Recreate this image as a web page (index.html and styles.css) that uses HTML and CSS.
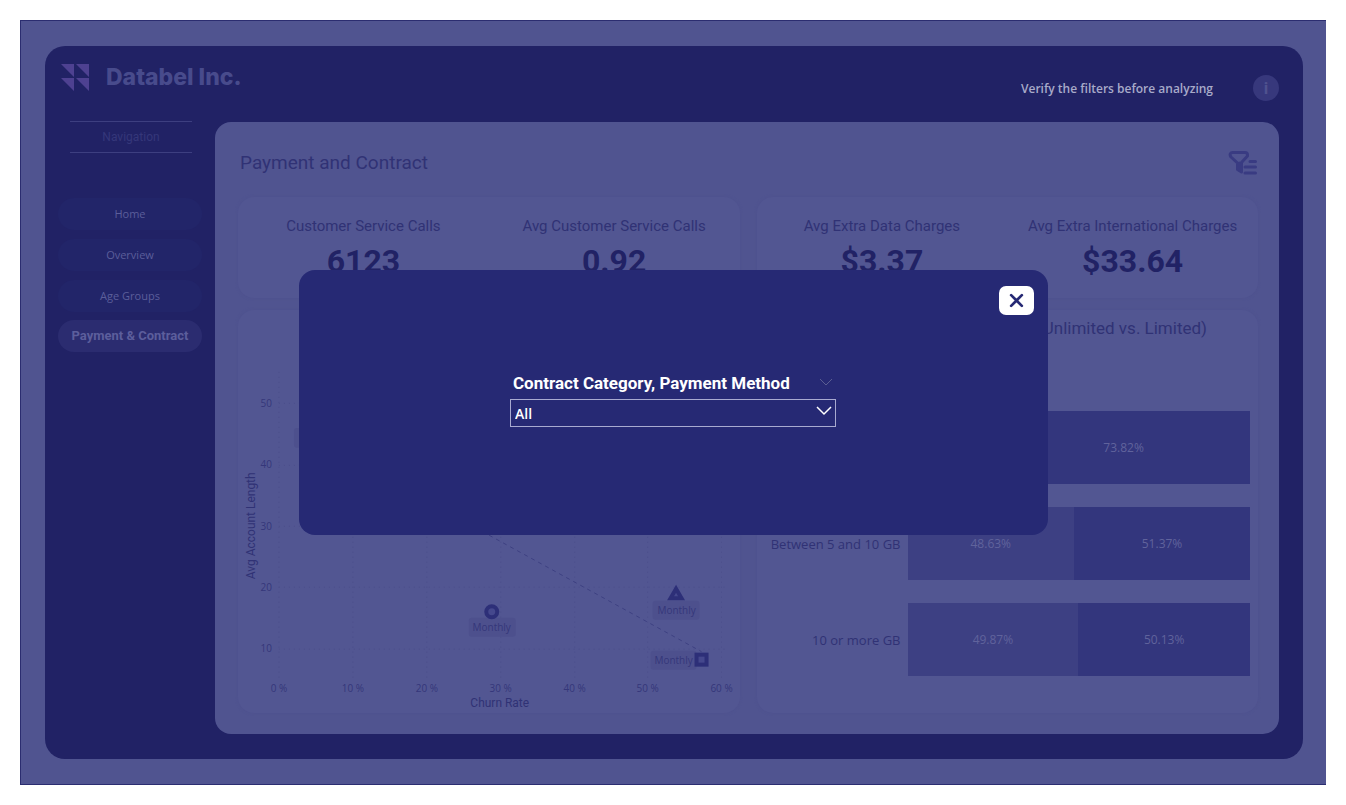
FILE: index.html
```html
<!DOCTYPE html>
<html lang="en">
<head>
<meta charset="utf-8">
<meta name="viewport" content="width=device-width, initial-scale=1">
<title>Databel Inc. - Payment and Contract</title>
<link rel="stylesheet" href="styles.css">
</head>
<body>
<div class="report">
  <div class="frame">
    <header class="topbar">
      <svg class="logo" viewBox="0 0 28 28" aria-hidden="true">
        <path d="M0 0h13v13zM15 0h13v13zM0 14h13v13zM15 14h13v13z"/>
      </svg>
      <span class="brand">Databel Inc.</span>
      <span class="notice">Verify the filters before analyzing</span>
      <button class="info" type="button" aria-label="Information">i</button>
    </header>

    <nav class="sidebar" aria-label="Pages">
      <div class="nav-title">Navigation</div>
      <a class="nav-link" href="#home">Home</a>
      <a class="nav-link" href="#overview">Overview</a>
      <a class="nav-link" href="#age">Age Groups</a>
      <a class="nav-link active" href="#payment">Payment &amp; Contract</a>
    </nav>

    <main class="panel">
      <div class="panel-head">
        <h1 class="page-title">Payment and Contract</h1>
        <button class="filter" type="button" aria-label="Filters">
          <svg viewBox="0 0 30 26" aria-hidden="true">
            <path d="M4.500 2.500H17q2.500 0 2.500 2.500v1L13.500 12.500V22L9.500 19.500V13L3 7Q1.500 5 2.500 3.500Q3 2.500 4.500 2.500z"/>
            <path d="M11.500 13v7M22 11.500h5.500M17 17h10.500M17 23h10.500"/>
          </svg>
        </button>
      </div>

      <div class="cards">
        <section class="card stats">
          <div class="stat"><span class="stat-label">Customer Service Calls</span><span class="stat-value">6123</span></div>
          <div class="stat"><span class="stat-label">Avg Customer Service Calls</span><span class="stat-value">0.92</span></div>
        </section>
        <section class="card stats">
          <div class="stat"><span class="stat-label">Avg Extra Data Charges</span><span class="stat-value">$3.37</span></div>
          <div class="stat"><span class="stat-label">Avg Extra International Charges</span><span class="stat-value">$33.64</span></div>
        </section>

        <section class="card">
          <svg class="scatter" viewBox="0 0 502 403" role="img" aria-label="Avg Account Length by Churn Rate">
            <g class="grid">
              <path d="M41 62V370M115 62V370M189 62V370M263 62V370M337 62V370M410 62V370M484 62V370"/>
              <path d="M41 93.500H488M41 155.500H488M41 216.500H488M41 277.500H488M41 339.500H488"/>
            </g>
            <g class="tick tick-y">
              <text x="34" y="97">50</text><text x="34" y="158">40</text><text x="34" y="220">30</text><text x="34" y="281">20</text><text x="34" y="342">10</text>
            </g>
            <g class="tick">
              <text x="41" y="382">0 %</text><text x="115" y="382">10 %</text><text x="189" y="382">20 %</text><text x="263" y="382">30 %</text><text x="337" y="382">40 %</text><text x="410" y="382">50 %</text><text x="484" y="382">60 %</text>
            </g>
            <text class="axis" x="262" y="397">Churn Rate</text>
            <text class="axis" transform="translate(17 216) rotate(-90)">Avg Account Length</text>
            <path class="trend" d="M90 137L464 342"/>
            <g class="chip">
              <rect x="56" y="118" width="44" height="20" rx="3"/>
              <rect x="231" y="308" width="47" height="19" rx="3"/>
              <rect x="415" y="291" width="47" height="19" rx="3"/>
              <rect x="413" y="341" width="46" height="19" rx="3"/>
            </g>
            <g class="marker">
              <circle cx="254" cy="302" r="5.500"/>
              <path d="M438.500 279L444 288.500H433z"/>
              <rect x="459" y="345" width="10" height="10"/>
            </g>
            <g class="tick">
              <text x="254" y="321">Monthly</text><text x="439" y="304">Monthly</text><text x="436" y="354">Monthly</text>
            </g>
          </svg>
        </section>

        <section class="card usage">
          <h2 class="usage-title">(Unlimited vs. Limited)</h2>
          <div class="bars">
            <span class="bar-label"></span>
            <div class="bar"><span class="seg light" style="width:26.18%"></span><span class="seg" style="width:73.82%">73.82%</span></div>
            <span class="bar-label">Between 5 and 10 GB</span>
            <div class="bar"><span class="seg light" style="width:48.63%">48.63%</span><span class="seg" style="width:51.37%">51.37%</span></div>
            <span class="bar-label">10 or more GB</span>
            <div class="bar"><span class="seg light" style="width:49.87%">49.87%</span><span class="seg" style="width:50.13%">50.13%</span></div>
          </div>
        </section>
      </div>
    </main>
  </div>
</div>

<div class="overlay">
  <div class="modal" role="dialog" aria-label="Filters">
    <button class="close" type="button" aria-label="Close">
      <svg viewBox="0 0 14 14" aria-hidden="true"><path d="M2 2l10 10M12 2L2 12"/></svg>
    </button>
    <div class="slicer">
      <div class="slicer-head">
        <label for="category">Contract Category, Payment Method</label>
        <svg class="chevron faint" viewBox="0 0 16 10" aria-hidden="true"><path d="M2 1l6 6 6-6"/></svg>
      </div>
      <div class="select-wrap">
        <select class="select" id="category"><option>All</option></select>
        <svg class="chevron" viewBox="0 0 16 10" aria-hidden="true"><path d="M1 1l7 7 7-7"/></svg>
      </div>
    </div>
  </div>
</div>
</body>
</html>
```

FILE: styles.css
```css
* { box-sizing: border-box; }

body {
  margin: 0;
  min-height: 100vh;
  padding: 20px;
  display: flex;
  background: #fff;
  color: #303275;
  font-family: "Open Sans", "Noto Sans", sans-serif;
}

button { border: 0; padding: 0; font: inherit; cursor: pointer; }

.report {
  flex: 1;
  display: flex;
  padding: 25px 23px 25px 24px;
  background: #505490;
  border: 1px solid #2b2d70;
  border-right: 0;
}

.frame {
  flex: 1;
  display: grid;
  grid-template: 76px 1fr / 170px 1fr;
  padding: 0 24px 25px 0;
  background: #212265;
  border-radius: 20px;
}

.topbar {
  grid-column: 1 / -1;
  display: flex;
  align-items: center;
  padding-left: 16px;
}
.logo { width: 28px; height: 28px; margin-bottom: 12px; fill: #4e4191; }
.brand {
  margin: 0 auto 14px 17px;
  font: 800 23px/32px Inter, sans-serif;
  color: #484b8c;
}
.notice { margin: 10px 40px 0 0; font-size: 12px; font-weight: 600; line-height: 20px; color: #a8aac9; }
.info {
  width: 26px;
  height: 26px;
  margin-top: 8px;
  border-radius: 50%;
  background: #37387c;
  color: #50528f;
  font: 700 17px/26px Roboto, sans-serif;
}

.sidebar { display: flex; flex-direction: column; gap: 9px; padding: 0 13px; }
.nav-title {
  margin: -1px 10px 36px 12px;
  border: solid #3d3f80;
  border-width: 1px 0;
  font: 12px/30px Roboto, sans-serif;
  text-align: center;
  color: #35377a;
}
.nav-link {
  border-radius: 16px;
  background: #222569;
  font-size: 11px;
  line-height: 32px;
  text-align: center;
  text-decoration: none;
  color: #5b5e9a;
}
.nav-link.active { margin-top: -1px; background: #2b2c70; font: 700 13px/32px Roboto, sans-serif; color: #5c5e9c; }

.panel { display: flex; flex-direction: column; padding: 0 21px 21px 23px; background: #505490; border-radius: 16px; }
.panel-head { display: flex; justify-content: space-between; align-items: center; height: 75px; padding: 7px 0 0 2px; }
.page-title { margin: 0; font: 400 19px/28px Roboto, sans-serif; }
.filter { width: 30px; height: 26px; background: none; }
.filter svg { display: block; fill: none; stroke: #393b82; stroke-width: 3; stroke-linecap: round; stroke-linejoin: round; }

.cards { flex: 1; display: grid; grid-template: 101px 1fr / 1fr 1fr; gap: 12px 17px; }
.card { border-radius: 16px; background: #525692; box-shadow: 0 0 3px #4e518e; }

.stats { display: grid; grid-template-columns: 1fr 1fr; }
.stat { display: flex; flex-direction: column; align-items: center; padding-top: 18px; white-space: nowrap; }
.stat-label { font: 15px/22px Roboto, sans-serif; }
.stat-value { font: 700 32px/48px Roboto, sans-serif; color: #212265; }

.scatter { display: block; width: 100%; height: auto; }
.scatter path, .scatter rect, .scatter circle { fill: none; }
.grid { stroke: #4b4e8b; stroke-dasharray: 1 4; }
.tick { font-size: 10px; fill: #35377a; text-anchor: middle; }
.tick-y { text-anchor: end; }
.axis { font: 12px Roboto, sans-serif; fill: #303275; text-anchor: middle; }
.trend { stroke: #3d4082; stroke-width: 1; stroke-dasharray: 4 4; }
.scatter .chip rect { fill: #4d508d; }
.marker { stroke: #2d2f78; stroke-width: 4; }
.scatter .marker > * { fill: #45488d; }

.usage { padding: 5px 8px 0 8px; }
.usage-title { margin: 0 43px 0 0; font: 400 17px/26px Roboto, sans-serif; text-align: right; }
.bars {
  display: grid;
  grid-template-columns: 136px 1fr;
  grid-auto-rows: 73px;
  gap: 23px 7px;
  padding-top: 70px;
  align-items: center;
}
.bar-label { font-size: 13px; text-align: right; white-space: nowrap; }
.bar { display: flex; height: 73px; }
.seg { background: #33367d; font-size: 12px; line-height: 73px; text-align: center; color: #60639c; }
.seg.light { background: #3d4083; }

.overlay { position: absolute; inset: 0; display: grid; place-items: center; padding: 20px; }
.modal {
  position: relative;
  display: grid;
  place-items: center;
  width: 100%;
  max-width: 749px;
  min-height: 265px;
  padding-bottom: 7px;
  border-radius: 16px;
  background: #262974;
}
.close {
  position: absolute;
  top: 16px;
  right: 14px;
  display: grid;
  place-items: center;
  width: 35px;
  height: 29px;
  border-radius: 7px;
  background: #fff;
}
.close svg { width: 15px; stroke: #262974; stroke-width: 2.5; stroke-linecap: round; }
.slicer { width: 326px; color: #fff; }
.slicer-head { display: flex; justify-content: space-between; align-items: center; padding: 0 2px 4px 3px; font: 700 17px/24px Roboto, sans-serif; white-space: nowrap; }
.chevron { width: 16px; height: 10px; fill: none; stroke: #fff; stroke-width: 1.5; }
.chevron.faint { stroke: #5a5d92; stroke-width: 1; }
.select-wrap { display: grid; align-items: center; }
.select-wrap > * { grid-area: 1 / 1; }
.select-wrap .chevron { justify-self: end; margin: 0 4px 4px 0; pointer-events: none; }
.select {
  appearance: none;
  width: 100%;
  height: 28px;
  padding: 0 4px;
  border: 1px solid #a8aad0;
  border-radius: 0;
  background: transparent;
  color: #fff;
  font: 600 14px "Open Sans", sans-serif;
}
```
